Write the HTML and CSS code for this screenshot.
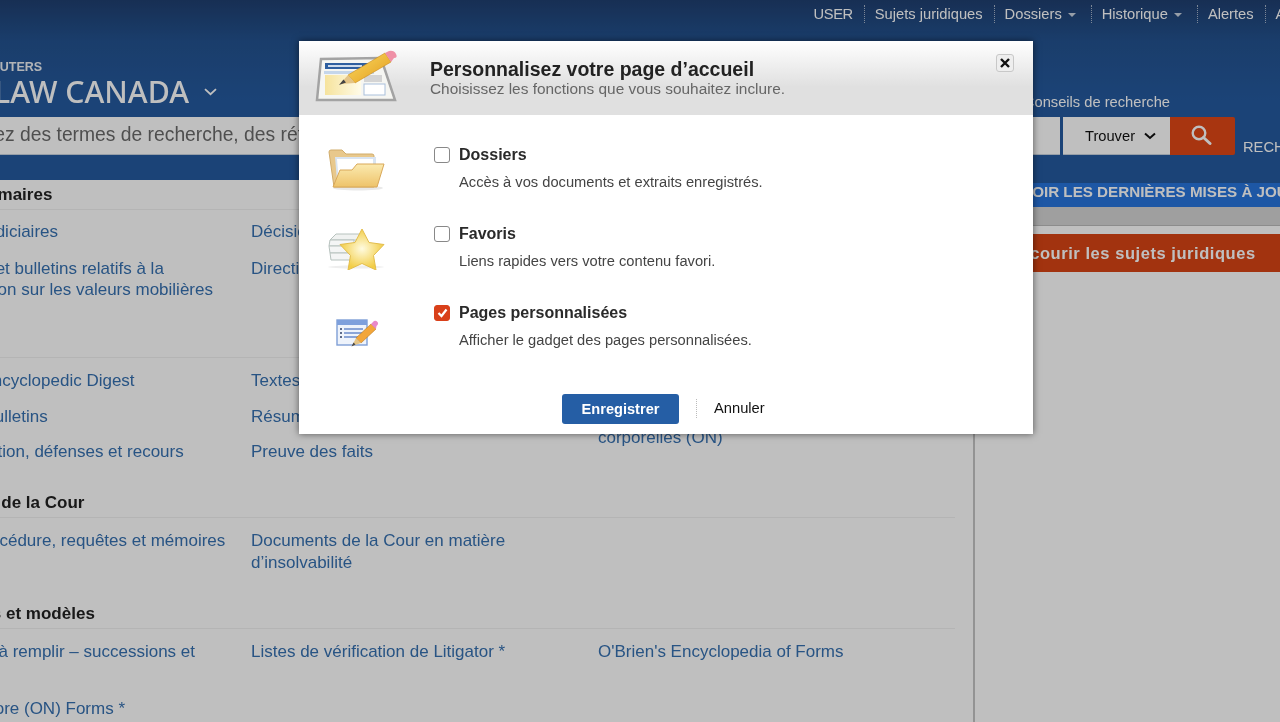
FILE: index.html
```html
<!DOCTYPE html>
<html lang="fr">
<head>
<meta charset="utf-8">
<title>Personnalisez votre page d’accueil</title>
<link rel="stylesheet" href="styles.css">
</head>
<body>
<div class="app">
  <header class="header">
    <nav class="topnav">
      <a class="nav-item nav-user">USER</a>
      <a class="nav-item">Sujets juridiques</a>
      <a class="nav-item has-caret">Dossiers</a>
      <a class="nav-item has-caret">Historique</a>
      <a class="nav-item">Alertes</a>
      <a class="nav-item">Aide</a>
    </nav>
    <div class="brandrow">
      <div class="brand">
        <div class="brand-top">THOMSON REUTERS</div>
        <div class="brand-name">WESTLAW CANADA
          <svg class="brand-chevron" width="13" height="8" viewBox="0 0 13 8"><path d="M1 1.2l5.500 5 5.500-5" fill="none" stroke="currentColor" stroke-width="1.800"/></svg>
        </div>
      </div>
      <a class="tips">Conseils de recherche</a>
    </div>
    <div class="searchrow">
      <div class="search-input">Entrez des termes de recherche, des références ou des titres</div>
      <div class="search-find">Trouver
        <svg width="12" height="8" viewBox="0 0 12 8"><path d="M1 1.500l5 4.500 5-4.500" fill="none" stroke="#111" stroke-width="2"/></svg>
      </div>
      <button class="search-go" type="button" aria-label="Rechercher">
        <svg width="22" height="22" viewBox="0 0 22 22"><circle cx="9" cy="9" r="6.300" fill="none" stroke="#fff" stroke-width="2.400"/><path d="M13.500 13.500l6.500 6" stroke="#fff" stroke-width="3" stroke-linecap="round"/></svg>
      </button>
      <span class="search-adv">RECHERCHE</span>
    </div>
  </header>

  <div class="content">
    <main class="main">
      <section class="section section-first">
        <h2 class="section-title">Sources primaires</h2>
        <div class="columns">
          <ul class="list">
            <li>Décisions judiciaires</li>
            <li>Instructions et bulletins relatifs à la réglementation sur les valeurs mobilières</li>
          </ul>
          <ul class="list">
            <li>Décisions</li>
            <li>Directives</li>
          </ul>
          <ul class="list"></ul>
        </div>
      </section>
      <section class="section section-open">
        <div class="columns">
          <ul class="list">
            <li>Canadian Encyclopedic Digest</li>
            <li>Revues et bulletins</li>
            <li>Causes d’action, défenses et recours</li>
          </ul>
          <ul class="list">
            <li>Textes</li>
            <li>Résumés</li>
            <li>Preuve des faits</li>
          </ul>
          <ul class="list list-third">
            <li>Dommages-intérêts pour lésions corporelles (ON)</li>
          </ul>
        </div>
      </section>
      <section class="section section-court">
        <h2 class="section-title">Documents de la Cour</h2>
        <div class="columns">
          <ul class="list">
            <li>Actes de procédure, requêtes et mémoires</li>
          </ul>
          <ul class="list">
            <li>Documents de la Cour en matière d’insolvabilité</li>
          </ul>
          <ul class="list"></ul>
        </div>
      </section>
      <section class="section">
        <h2 class="section-title">Formulaires et modèles</h2>
        <div class="columns">
          <ul class="list">
            <li>Formulaires à remplir – successions et fiducies</li>
            <li>Practices Store (ON) Forms *</li>
          </ul>
          <ul class="list">
            <li>Listes de vérification de Litigator *</li>
          </ul>
          <ul class="list">
            <li>O'Brien's Encyclopedia of Forms</li>
          </ul>
        </div>
      </section>
    </main>
    <aside class="aside">
      <div class="updates">VOIR LES DERNIÈRES MISES À JOUR</div>
      <div class="band"></div>
      <div class="browse">Parcourir les sujets juridiques</div>
    </aside>
  </div>
</div>

<div class="overlay"></div>

<div class="modal" role="dialog">
  <div class="modal-head">
    <svg class="head-icon" width="84" height="54" viewBox="0 0 84 54">
      <defs>
        <linearGradient id="yel" x1="0" y1="0" x2="1" y2="0"><stop offset="0" stop-color="#f6e39c"/><stop offset="1" stop-color="#fffbe8"/></linearGradient>
        <linearGradient id="pen" x1="0" y1="0" x2="1" y2="1"><stop offset="0" stop-color="#fbdc62"/><stop offset="1" stop-color="#e29a1c"/></linearGradient>
      </defs>
      <path d="M7 9L67 8 81 50 3 50Z" fill="#f6f6f2" stroke="#a3a3a3" stroke-width="2.500"/>
      <rect x="11" y="13" width="47" height="6" fill="#2f5f9f"/>
      <rect x="14" y="15" width="34" height="2" fill="#cfdcec"/>
      <rect x="10" y="21" width="50" height="3" fill="#c5d6ea"/>
      <rect x="11" y="25" width="36" height="20" fill="url(#yel)"/>
      <rect x="50" y="25" width="18" height="7" fill="#d4d4d4"/>
      <rect x="50" y="34" width="21" height="11" fill="#fff" stroke="#aac0db"/>
      <path d="M34 25L71 3 77 12 41 33Z" fill="url(#pen)" stroke="#c98a1a" stroke-width=".6"/>
      <path d="M26 34L34 25 41 33Z" fill="#e4c486"/>
      <path d="M25 35L29.500 29.500 32 32.500Z" fill="#444"/>
      <path d="M71 3L75 1Q80 0 82 4T80 8L77 12Z" fill="#ef90a6"/>
    </svg>
    <div class="head-text">
      <h1 class="modal-title">Personnalisez votre page d’accueil</h1>
      <p class="modal-sub">Choisissez les fonctions que vous souhaitez inclure.</p>
    </div>
    <button class="modal-close" type="button" aria-label="Fermer">
      <svg width="10" height="10" viewBox="0 0 10 10"><path d="M1 1l8 8M9 1l-8 8" stroke="#111" stroke-width="2.400"/></svg>
    </button>
  </div>

  <div class="modal-body">
    <div class="option">
      <div class="option-icon">
        <svg width="58" height="42" viewBox="0 0 58 42">
          <defs>
            <linearGradient id="fold" x1="0" y1="0" x2="0" y2="1"><stop offset="0" stop-color="#fbeab0"/><stop offset="1" stop-color="#eec36a"/></linearGradient>
          </defs>
          <ellipse cx="30" cy="39" rx="25" ry="2.500" fill="#e9e9e9"/>
          <path d="M1 3Q1 1 3 1H14L18 5H44Q46 5 46 7V38H6Z" fill="#e8c88c" stroke="#d1ac6b"/>
          <path d="M7 8H48V32H9Z" fill="#d9e4f1"/>
          <path d="M9 10H45V34H11Z" fill="#fff"/>
          <path d="M12 21H24L29 15H56L49 38H5Z" fill="url(#fold)" stroke="#d9a858"/>
        </svg>
      </div>
      <div class="option-text">
        <label class="option-label"><span class="check"></span>Dossiers</label>
        <p class="option-desc">Accès à vos documents et extraits enregistrés.</p>
      </div>
    </div>
    <div class="option">
      <div class="option-icon">
        <svg width="58" height="42" viewBox="0 0 58 42">
          <defs>
            <radialGradient id="starg" cx=".5" cy=".48" r=".5"><stop offset="0" stop-color="#fffbe0"/><stop offset="1" stop-color="#f2cd45"/></radialGradient>
          </defs>
          <ellipse cx="28" cy="39" rx="28" ry="1.500" fill="#eeeeee"/>
          <path d="M8 6H34V12H2Z" fill="#f0f2f1" stroke="#b7c2be"/>
          <path d="M2 12H26V18H1Z" fill="#f4f5f5" stroke="#b7c2be"/>
          <path d="M1 18H24V25H2Z" fill="#f4f5f5" stroke="#b7c2be"/>
          <path d="M2 25H28V32H3Z" fill="#f4f5f5" stroke="#b7c2be"/>
          <path d="M34 1L41 14.500 56 16.500 45.500 27.500 48 42 34 35.500 20 42 22.500 27.500 12 16.500 27 14.500Z" fill="url(#starg)" stroke="#e3bd4c" stroke-width="1" stroke-linejoin="round"/>
        </svg>
      </div>
      <div class="option-text">
        <label class="option-label"><span class="check"></span>Favoris</label>
        <p class="option-desc">Liens rapides vers votre contenu favori.</p>
      </div>
    </div>
    <div class="option">
      <div class="option-icon">
        <svg class="icon-small" width="42" height="30" viewBox="0 0 42 30">
          <rect x="1" y="2" width="30" height="25" fill="#eef3fb" stroke="#7f9fd6" stroke-width="1.400"/>
          <rect x="1" y="2" width="30" height="5" fill="#7ea0dc"/>
          <path d="M4 11h2M4 15h2M4 19h2" stroke="#2e3f66" stroke-width="1.600"/>
          <path d="M8 11h19M8 15h19M8 19h19" stroke="#6b8ccc" stroke-width="1.500"/>
          <path d="M20 20L35 6 40 11 25 25Z" fill="#f3a63a" stroke="#b97a20" stroke-width=".6"/>
          <path d="M16 28L20 20 25 25Z" fill="#e4c486"/>
          <path d="M15.500 28.500L17.500 24.500 19.500 26.500Z" fill="#444"/>
          <path d="M35 6L38 3Q40 2 41.500 4T40.500 8L40 11Z" fill="#e988c8"/>
        </svg>
      </div>
      <div class="option-text">
        <label class="option-label"><span class="check check-on"><svg width="11" height="10" viewBox="0 0 11 10"><path d="M1.500 5l3 3 5-6.500" fill="none" stroke="#fff" stroke-width="2.200"/></svg></span>Pages personnalisées</label>
        <p class="option-desc">Afficher le gadget des pages personnalisées.</p>
      </div>
    </div>
  </div>

  <div class="modal-foot">
    <button class="btn-save" type="button">Enregistrer</button>
    <a class="btn-cancel">Annuler</a>
  </div>
</div>
</body>
</html>
```

FILE: styles.css
```css
* { box-sizing: border-box; }
html, body { margin: 0; padding: 0; height: 100%; overflow: hidden; }
body { font-family: "Liberation Sans", Arial, sans-serif; background: #fff; filter: blur(.4px); }
h1, h2, p, ul { margin: 0; padding: 0; }
ul { list-style: none; }

.app { width: 1280px; height: 722px; overflow: hidden; }

/* Header */
.header {
  height: 180px;
  background: linear-gradient(#1f3f70 0, #23528f 40px, #255a9f 100px, #255a9f 100%);
  color: #fff;
  overflow: hidden;
}
.topnav {
  display: flex; justify-content: flex-end;
  height: 28px; align-items: center;
  margin-right: -25px;
  font-size: 14.700px;
}
.nav-item {
  display: flex; align-items: center;
  height: 18px;
  padding: 0 11px 0 10px;
  border-right: 1px dotted rgba(255,255,255,.6);
  white-space: nowrap;
}
.nav-item:last-child { border-right: 0; padding-right: 0; }
.nav-user { letter-spacing: -.4px; }
.has-caret::after {
  content: ""; margin: 2px 4px 0 6px;
  border: 4.500px solid transparent; border-top-color: #c9d3e0; border-bottom: 0;
}
.brandrow { display: flex; justify-content: space-between; align-items: flex-start; height: 89px; }
.brand { margin: 32px 0 0 -85px; white-space: nowrap; }
.brand-top { font-size: 12.500px; font-weight: 700; line-height: 14px; color: #eef1f5; }
.brand-name { font-family: "Noto Sans", sans-serif; font-size: 30.300px; font-weight: 500; line-height: 36px; }
.brand-chevron { margin-left: 7px; vertical-align: 7px; }
.tips { margin: 65px 110px 0 0; font-size: 14.700px; line-height: 18px; white-space: nowrap; }
.searchrow { display: flex; height: 38px; align-items: stretch; margin-left: -47px; }
.search-input {
  flex: 1; background: #fff; color: #6a6a6a;
  font-size: 19.300px; line-height: 35px; padding-left: 6px;
  border-bottom: 1px solid #c9d3df;
  white-space: nowrap; overflow: hidden;
}
.search-find {
  width: 107px; margin-left: 3px;
  background: #fff; color: #111;
  font-size: 14.700px;
  display: flex; align-items: center; justify-content: center; gap: 9px;
  padding-left: 8px; padding-top: 1px;
  border-bottom: 1px solid #c9d3df;
}
.search-go {
  width: 65px; border: 0; padding: 0 4px 2px 0; margin: 0;
  background: #e14716; border-radius: 0 2px 2px 0;
  display: flex; align-items: center; justify-content: center;
}
.search-adv {
  width: 37px; margin-left: 8px; font-size: 14.700px; overflow: hidden;
  white-space: nowrap; align-self: flex-end; line-height: 16px;
}

/* Body */
.content { display: flex; height: 542px; }
.main {
  width: 1071px; flex: none; margin-left: -96px;
  padding-right: 18px;
  border-right: 2px solid #c4c4c4;
  background: #fff;
}
.section-title {
  font-size: 17px; font-weight: 700; color: #222;
  line-height: 20px; padding: 5px 0 4px;
  border-bottom: 1px solid #f0f0f0;
}
.columns { display: grid; grid-template-columns: 347px 347px 1fr; }
.list { font-size: 17px; line-height: 21.500px; color: #3670b0; }
.list li { margin-top: 14px; max-width: 330px; }
.list li:first-child { margin-top: 12px; }
.section-first .list { line-height: 20.500px; }
.section-first .list li + li { margin-top: 16.500px; }
.section-first .columns { height: 147px; }
.section-open { border-top: 1px solid #f0f0f0; }
.section-open .columns { height: 130px; }
.list-third li:first-child { margin-top: 47px; }
.section-court .columns { height: 81px; }

.aside { flex: 1; min-width: 0; background: #fff; }
.updates {
  height: 27px;
  border-top: 3px solid #255a9f;
  background: #2774dc; color: #fff;
  font-size: 15.200px; font-weight: 700; line-height: 17px;
  padding-left: 47px; white-space: nowrap; overflow: hidden;
}
.band { height: 19px; background: #d5d5d5; border-bottom: 1px solid #bbb; }
.browse {
  height: 38px; margin-top: 8px;
  background: #d94414; color: #fff;
  font-size: 16.500px; font-weight: 700; letter-spacing: .55px; line-height: 38px;
  padding-left: 27px; white-space: nowrap;
}

/* Overlay + modal */
.overlay { position: fixed; inset: 0; background: rgba(0,0,0,.25); }
.modal {
  position: absolute; left: 299px; top: 41px; width: 734px; height: 393px;
  background: #fff;
  box-shadow: 0 0 7px rgba(0,0,0,.55);
  display: flex; flex-direction: column;
  color: #222;
}
.modal-head {
  height: 74px; flex: none;
  background: linear-gradient(#fff 0, #e0e0e0 62%, #e0e0e0 100%);
  display: flex; align-items: flex-start;
  padding: 9px 19px 0 15px;
}
.head-text { margin: 8px 0 0 32px; flex: 1; }
.modal-title { font-size: 19.500px; font-weight: 700; line-height: 22px; color: #222; }
.modal-sub { font-size: 15.400px; line-height: 18px; color: #666; }
.modal-close {
  width: 18px; height: 18px; margin-top: 4px; padding: 0;
  background: #eee; border: 1px solid #c8c8c8; border-radius: 3px;
  display: flex; align-items: center; justify-content: center;
}
.modal-body { flex: 1; padding-top: 31px; }
.option { display: flex; height: 79px; }
.option-icon { width: 135px; padding: 4px 0 0 29px; flex: none; margin-top: -1px; }
.icon-small { margin: 11px 0 0 8px; display: block; }
.option-text { flex: 1; }
.option-label { display: flex; align-items: center; font-size: 16px; font-weight: 700; line-height: 18px; color: #2a2a2a; height: 18px; }
.check {
  width: 16px; height: 16px; margin-right: 9px; flex: none;
  border: 1.500px solid #888; border-radius: 3px; background: #fff;
  display: flex; align-items: center; justify-content: center;
}
.check-on { background: #d9401a; border-color: #d9401a; }
.option-desc { font-size: 14.700px; line-height: 18px; margin: 9px 0 0 25px; color: #444; }
.modal-foot {
  height: 40px; flex: none;
  display: flex; align-items: flex-start;
  padding-left: 263px;
}
.btn-save {
  width: 117px; height: 30px;
  background: #255ea5; color: #fff;
  border: 0; border-radius: 3px;
  font: 700 14.600px "Liberation Sans", Arial, sans-serif;
}
.btn-cancel {
  margin: 5px 0 0 17px; padding-left: 17px;
  border-left: 1px dotted #bbb;
  font-size: 14.700px; line-height: 19px; color: #111;
}
```
